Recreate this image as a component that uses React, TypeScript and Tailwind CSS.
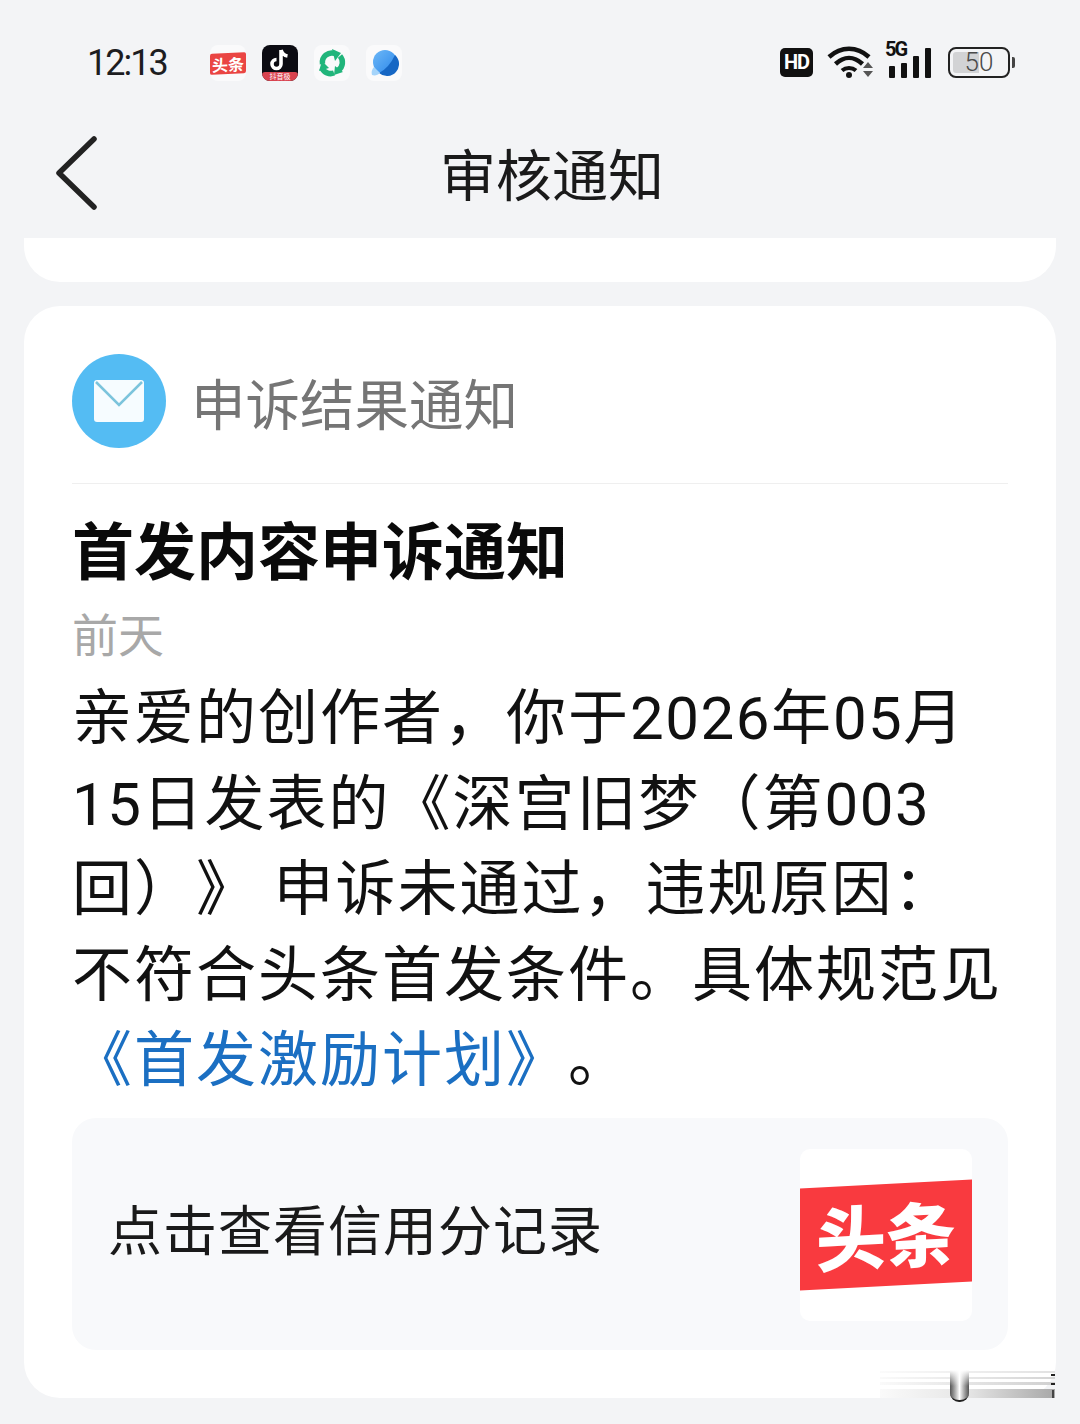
import React from 'react'

const cjk = '"Noto Sans CJK SC", sans-serif'

function StatusIcons() {
  return (
    <div className="flex items-center">
      <div className="w-[33px] h-[29px] bg-[#111] rounded-[5px] flex items-center justify-center text-white text-[20px] font-bold font-['Roboto'] tracking-[-1px]">HD</div>
      <svg className="ml-[14px]" width="46" height="34" viewBox="0 0 46 34">
        <path d="M2 12C14 1 30 1 42 12" fill="none" stroke="#111" strokeWidth="4.500" />
        <path d="M8.500 19C17 11 27 11 35.500 19" fill="none" stroke="#111" strokeWidth="4.500" />
        <path d="M15 25.500C19 22 25 22 29 25.500" fill="none" stroke="#111" strokeWidth="4" />
        <circle cx="22" cy="30" r="3" fill="#111" />
        <path d="M36 23h10l-5-6zM36 26h10l-5 6z" fill="#555" />
      </svg>
      <div className="relative w-[46px] h-[32px] ml-[12px]">
        <span className="absolute left-0 top-[-7px] text-[20px] leading-[20px] font-bold font-['Roboto'] text-[#111] tracking-[-2px]">5G</span>
        <div className="absolute left-[4px] bottom-0 flex items-end gap-[6px]">
          <div className="w-[6px] h-[12px] bg-[#111] rounded-[1px]" />
          <div className="w-[6px] h-[15px] bg-[#111] rounded-[1px]" />
          <div className="w-[6px] h-[22px] bg-[#111] rounded-[1px]" />
          <div className="w-[6px] h-[30px] bg-[#111] rounded-[1px]" />
        </div>
      </div>
      <div className="flex items-center ml-[17px]">
        <div className="relative w-[62px] h-[31px] border-[2px] border-[#222] rounded-[8px] p-[3px] flex">
          <div className="w-[26px] bg-[#d2d3d5] rounded-l-[3px]" />
          <span className="absolute inset-0 flex items-center justify-center text-[26px] text-[#4a4a4a] font-['Roboto'] font-light">50</span>
        </div>
        <div className="w-[3px] h-[11px] bg-[#444] rounded-r-[2px] ml-[2px]" />
      </div>
    </div>
  )
}

function NotifyIcons() {
  return (
    <div className="flex items-center ml-[43px] gap-[16px]">
      <div className="w-[36px] h-[36px] bg-[#fafafb] rounded-[8px] flex items-center">
        <div className="w-[36px] h-[21px] bg-[#ea4543] rounded-[2px] -skew-y-[3deg] flex items-center justify-center text-white text-[16px] leading-none font-bold" style={{ fontFamily: cjk }}>头条</div>
      </div>
      <div className="relative w-[36px] h-[36px] bg-[#0b0b12] rounded-[8px] overflow-hidden flex justify-center">
        <svg className="mt-[3px]" width="22" height="24" viewBox="0 0 22 24">
          <path d="M12 2v14a4.500 4.500 0 1 1-4.500-4.500M12 2c1 3.500 3.500 5.500 6.500 6" fill="none" stroke="#fff" strokeWidth="3.600" />
        </svg>
        <div className="absolute left-0 right-0 bottom-0 h-[9px] bg-[#d8434f] rounded-t-[3px] flex items-center justify-center text-white text-[7px] leading-none">抖音极</div>
      </div>
      <div className="w-[36px] h-[36px] bg-[#fafafb] rounded-[8px] flex items-center justify-center">
        <svg width="30" height="30" viewBox="0 0 30 30">
          <path d="M5.500 16A9.500 9.500 0 0 1 18 5.500" fill="none" stroke="#21b57b" strokeWidth="5.500" />
          <path d="M15 1l9 4-6 8z" fill="#21b57b" />
          <path d="M23 8a9.500 9.500 0 0 1-1.500 14" fill="none" stroke="#21b57b" strokeWidth="5.500" />
          <path d="M26 24l-9 3 1-9z" fill="#21b57b" />
          <path d="M17 25a9.500 9.500 0 0 1-12-5" fill="none" stroke="#21b57b" strokeWidth="5.500" />
          <path d="M2 23l3-10 7 7z" fill="#21b57b" />
        </svg>
      </div>
      <div className="w-[36px] h-[36px] bg-[#fafafb] rounded-[8px] flex items-center justify-center">
        <svg width="30" height="30" viewBox="0 0 30 30">
          <defs>
            <linearGradient id="planet" x1="0" y1="0" x2="1" y2="1">
              <stop offset="0" stopColor="#6db8f7" />
              <stop offset="1" stopColor="#2a86ea" />
            </linearGradient>
          </defs>
          <circle cx="16" cy="14" r="12" fill="url(#planet)" />
          <path d="M26 7A12 12 0 0 1 10 25Q20 20 26 7z" fill="#1667c4" />
          <path d="M3 27c-1-3 0-6 2-8l6 6c-2 2-5 3-8 2z" fill="#a5d4fa" />
        </svg>
      </div>
    </div>
  )
}

// smeared watermark left in the bottom corner of the card
function Watermark() {
  return (
    <div className="absolute left-[880px] top-[1368px] w-[175px] h-[34px]">
      <div className="absolute left-0 right-0 top-[3px] h-[2px] bg-linear-to-r from-[#fbfbfb] to-[#e2e2e2]" />
      <div className="absolute left-0 right-0 top-[9px] h-[2px] bg-linear-to-r from-[#fafafa] to-[#d4d4d4]" />
      <div className="absolute left-0 right-0 top-[14px] h-[3px] bg-linear-to-r from-[#fafafa] to-[#d0d0d0]" />
      <div className="absolute left-0 right-0 top-[21px] h-[9px] bg-linear-to-r from-[#fafafa] via-[#e6e6e6] to-[#a8a8a8]" />
      <div className="absolute left-[70px] top-[2px] w-[19px] h-[32px] rounded-b-[9px] border-b-2 border-[#222] bg-linear-to-r from-[#555] via-white to-[#555]" />
      <div className="absolute left-[70px] top-[2px] w-[19px] h-[16px] bg-linear-to-b from-white to-transparent" />
      <div className="absolute right-0 top-[6px] w-[4px] h-[11px] border-y-[2px] border-[#222]" />
      <div className="absolute right-[1px] top-[22px] w-[2px] h-[8px] bg-[#444]" />
    </div>
  )
}

export default function App() {
  const bodyLine = 'h-[85.500px] leading-[85.500px] whitespace-nowrap'
  const digits = "font-['Roboto'] tracking-[1.500px]"
  return (
    <div className="w-[1080px] h-[1424px] bg-[#f3f4f6] overflow-hidden relative [text-spacing-trim:space-all]" style={{ fontFamily: cjk }}>
      {/* status bar */}
      <div className="h-[118px] pl-[87px] pr-[65px] pt-[45px] flex items-start justify-between">
        <div className="flex items-center h-[36px]">
          <span className="w-[80px] text-[36px] leading-[36px] text-[#1d1d1f] font-['Roboto'] tracking-[-2px]">12:13</span>
          <NotifyIcons />
        </div>
        <StatusIcons />
      </div>

      {/* top bar */}
      <div className="relative h-[120px] flex items-start justify-center">
        <svg className="absolute left-[54px] top-[17px]" width="46" height="76" viewBox="0 0 46 76">
          <path d="M40 4L5 38l35 34" fill="none" stroke="#222" strokeWidth="5.500" strokeLinecap="round" strokeLinejoin="round" />
        </svg>
        <span className="text-[56px] leading-[80px] mt-[14px] ml-[24px] text-[#1a1a1a]">审核通知</span>
      </div>

      <div className="mx-[24px] h-[44px] bg-white rounded-b-[36px]" />

      {/* card */}
      <div className="mx-[24px] mt-[24px] h-[1092px] bg-white rounded-[36px] px-[48px] pt-[48px]">
        <div className="flex items-center h-[94px]">
          <div className="w-[94px] h-[94px] rounded-full bg-[#54bcf3] flex items-center justify-center">
            <svg width="50" height="42" viewBox="0 0 50 42">
              <rect width="50" height="42" rx="3" fill="#f6fcff" />
              <path d="M2 2l23 23L48 2" fill="none" stroke="#7cc4dc" strokeWidth="2.500" />
            </svg>
          </div>
          <span className="ml-[25px] mt-[2px] text-[54.500px] text-[#757575] leading-none">申诉结果通知</span>
        </div>
        <div className="mt-[35px] h-px bg-[#efefef]" />
        <div className="mt-[24px] text-[62px] leading-[80px] font-bold text-[#0a0a0a]">首发内容申诉通知</div>
        <div className="mt-[14px] text-[46px] leading-[60px] text-[#a8a8a8]">前天</div>
        <div className="mt-[8px] text-[60px] text-[#111] tracking-[2px]">
          <div className={bodyLine}>亲爱的创作者，你于<span className={digits}>2026</span>年<span className={digits}>05</span>月</div>
          <div className={bodyLine}><span className={digits}>15</span>日发表的《深宫旧梦（第<span className={digits}>003</span></div>
          <div className={bodyLine}>回）》 申诉未通过，违规原因：</div>
          <div className={bodyLine}>不符合头条首发条件。具体规范见</div>
          <div className={bodyLine}><span className="text-[#1b6fc2]">《首发激励计划》</span>。</div>
        </div>

        <div className="mt-[20px] h-[232px] bg-[#f8f9fb] rounded-[24px] flex items-center justify-between pl-[36px] pr-[36px]">
          <span className="mb-[12px] text-[54px] text-[#1a1a1a] tracking-[1px]">点击查看信用分记录</span>
          <div className="w-[172px] h-[172px] mt-[2px] bg-white rounded-[10px] flex items-center overflow-hidden">
            <div className="w-[172px] h-[102px] bg-[#f93a3f] -skew-y-[3deg] flex items-center justify-center text-white text-[70px] leading-none font-black pb-[4px]">头条</div>
          </div>
        </div>
      </div>
      <Watermark />
    </div>
  )
}
